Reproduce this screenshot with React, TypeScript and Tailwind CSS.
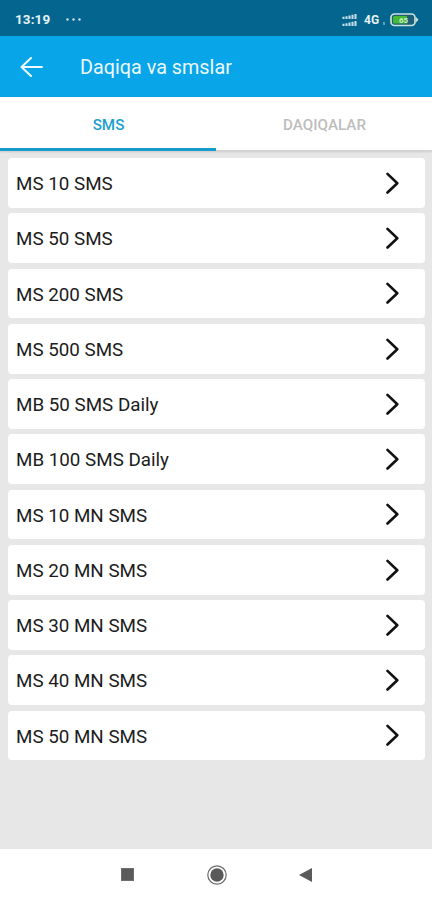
import { useState } from "react";

const tabs = [
    { id: "sms", label: "SMS" },
    { id: "minutes", label: "DAQIQALAR" },
];

const packages = [
    "MS 10 SMS",
    "MS 50 SMS",
    "MS 200 SMS",
    "MS 500 SMS",
    "MB 50 SMS Daily",
    "MB 100 SMS Daily",
    "MS 10 MN SMS",
    "MS 20 MN SMS",
    "MS 30 MN SMS",
    "MS 40 MN SMS",
    "MS 50 MN SMS",
];

function SignalIcon() {
    return (
        <svg width="16" height="14" viewBox="0 0 16 14" fill="none" stroke="#c5dde8" strokeWidth="2.1">
            <path d="M1.5 6V3.8M4.5 6V3.2M7.5 6V2.5M10.5 6V1.8M13.5 6V1" />
            <path d="M1.5 13v-2.2M4.5 13v-2.8M7.5 13V9.5M10.5 13V8.8M13.5 13V8" />
        </svg>
    );
}

function BatteryIcon() {
    return (
        <svg width="29" height="14" viewBox="0 0 29 14">
            <rect x="1" y="1" width="24" height="11.5" rx="3.5" fill="#1c5f77" stroke="#c8e2de" strokeWidth="1.7" />
            <path d="M4.5 3H17v7.5H4.5A1.5 1.5 0 0 1 3 9V4.5A1.5 1.5 0 0 1 4.5 3Z" fill="#45b932" />
            <path d="M26 4 28.5 6.8 26 9.5Z" fill="#c8e2de" />
            <text x="13.5" y="9.5" textAnchor="middle" fontSize="8" fontWeight="700" fill="#c9ecc9">65</text>
        </svg>
    );
}

function StatusBar() {
    return (
        <div className="flex h-9 items-center bg-[#04668f] pr-[13px] pl-[15px] pt-[3px] text-white">
            <span className="w-[51px] text-[13.5px] font-bold tracking-[0.1px] text-[#e6f2f7]">13:19</span>
            <svg width="15" height="3" viewBox="0 0 15 3" fill="#cfe3ec">
                <circle cx="1.5" cy="1.5" r="1.2" />
                <circle cx="7.5" cy="1.5" r="1.2" />
                <circle cx="13.5" cy="1.5" r="1.2" />
            </svg>
            <div className="ml-auto flex items-center">
                <SignalIcon />
                <span className="ml-[6px] w-[19px] text-[12px] font-bold text-[#e6f2f7]">4G</span>
                <span className="mt-[7px] mr-[5px] h-[3px] w-[2px] bg-[#5d9fb9]" />
                <BatteryIcon />
            </div>
        </div>
    );
}

function Header() {
    return (
        <header className="flex h-[61px] items-center bg-[#09a5e9] pt-[2px] pl-5 text-white">
            <button aria-label="Back" className="-mt-px w-[60px]">
                <svg width="23" height="20" viewBox="0 0 23 20" fill="none" stroke="#eefaff" strokeWidth="2" strokeLinecap="round" strokeLinejoin="round">
                    <path d="M11 1 1.5 10 11 19M1.5 10H22" />
                </svg>
            </button>
            <h1 className="pt-px text-[19.8px] text-[#ebf9ff]">Daqiqa va smslar</h1>
        </header>
    );
}

export default function App() {
    const [activeTab, setActiveTab] = useState("sms");

    return (
        <div className="flex h-[900px] w-[432px] flex-col overflow-hidden bg-[#e7e7e7] font-[Roboto,sans-serif]">
            <StatusBar />
            <Header />

            {/* Tabs */}
            <nav className="flex h-[54px] border-b border-[#d2d2d2] bg-white shadow-[0_1px_2px_rgba(0,0,0,0.12)]">
                {tabs.map((tab) => (
                    <button
                        key={tab.id}
                        onClick={() => setActiveTab(tab.id)}
                        className={`flex-1 border-b-[3px] pt-[6px] pl-px text-[15.2px] font-medium ${activeTab === tab.id
                            ? "-mb-px border-[#169ccb] text-[#1ba0cf]"
                            : "border-transparent text-[#bdbdbd]"
                            }`}
                    >
                        {tab.label}
                    </button>
                ))}
            </nav>

            {/* Package list */}
            <main className="flex flex-1 flex-col gap-[5.5px] pt-[7px] pr-[7px] pl-2">
                {packages.map((name) => (
                    <button
                        key={name}
                        className="flex h-[49.75px] shrink-0 items-center justify-between rounded-[4px] bg-white pr-[26px] pl-2 text-left text-[18.8px] text-[#1c1c1c]"
                    >
                        <span className="pt-[2.5px]">{name}</span>
                        <svg width="13" height="22" viewBox="0 0 13 22" fill="none" stroke="#111" strokeWidth="2.6" strokeLinecap="round" strokeLinejoin="round">
                            <path d="M1.5 1.9 11.3 11.2l-9.8 9.3" />
                        </svg>
                    </button>
                ))}
            </main>

            {/* System navigation */}
            <footer className="flex h-[51px] shrink-0 items-center bg-white pl-[120.5px]">
                <span className="h-[13px] w-[13px] border border-[#6d6d6d] bg-[#5a5a5a]" />
                <svg width="20" height="20" viewBox="0 0 20 20" className="ml-[73.5px]">
                    <circle cx="10" cy="10" r="9.2" fill="none" stroke="#6b6b6b" strokeWidth="1.2" />
                    <circle cx="10" cy="10" r="6.7" fill="#595959" />
                </svg>
                <svg width="13" height="14" viewBox="0 0 13 14" className="ml-[72px]">
                    <path d="M0 7 13 0v14Z" fill="#5a5a5a" />
                </svg>
            </footer>
        </div>
    );
}
